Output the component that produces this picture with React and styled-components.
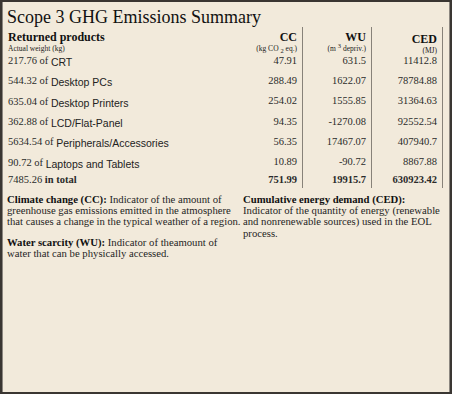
import React from "react";
import styled, { createGlobalStyle } from "styled-components";

const Global = createGlobalStyle`
  html, body {
    margin: 0;
    padding: 0;
    background: #f2eadb;
  }
`;

const Frame = styled.div`
  box-sizing: border-box;
  width: 452px;
  height: 394px;
  background: #f2eadb;
  border: 2px solid #3a3632;
  box-shadow: inset 1px 0 0 #8c8780, inset -1px 0 0 #8c8780;
  padding: 5px 4px 0 4px;
  font-family: "Liberation Serif", "Times New Roman", serif;
  color: #1a1a1a;
`;

const Title = styled.h1`
  margin: 0 0 0 1px;
  font-weight: normal;
  font-size: 18px;
  line-height: 20px;
  color: #111;
`;

const Table = styled.div`
  display: flex;
  align-items: stretch;
`;

const Column = styled.div`
  box-sizing: border-box;
  width: ${({ $w }) => $w}px;
  display: flex;
  flex-direction: column;
  align-items: ${({ $num }) => ($num ? "flex-end" : "flex-start")};
  padding: ${({ $num }) => ($num ? "0 5px 0 0" : "0 0 0 2px")};
`;

const Divider = styled.div`
  flex: 0 0 1px;
  width: 1px;
  background-color: #878279;
`;

const Cell = styled.div`
  height: ${({ $h }) => $h}px;
  display: flex;
  flex-direction: column;
  justify-content: ${({ $head }) => ($head ? "flex-start" : "center")};
  align-items: inherit;
  font-size: 10.5px;
  font-weight: ${({ $bold }) => ($bold ? "bold" : "normal")};
  color: #2a2a2a;
  white-space: nowrap;
`;

const HeadLabel = styled.div`
  font-weight: bold;
  font-size: 12px;
  line-height: 13px;
  margin-top: ${({ $top }) => $top}px;
  color: #111;
`;

const Unit = styled.div`
  font-size: 7.5px;
  line-height: 10px;
  color: #222;
`;

const Script = styled.span`
  font-size: 6.5px;
  line-height: 0;
  position: relative;
  top: ${({ $up }) => ($up ? "-3px" : "2px")};
`;

const Product = styled.span`
  font-family: "Liberation Sans", Arial, sans-serif;
  font-size: 10.5px;
  position: relative;
  top: 2px;
  color: #222;
`;

const Notes = styled.div`
  display: grid;
  grid-template-columns: 236px 1fr;
  margin-top: 6px;
  font-size: 10.7px;
  line-height: 11.3px;
  color: #1f1f1f;
`;

const Note = styled.p`
  margin: 0 0 9px 1px;
`;

const Heading = styled.b`
  display: ${({ $block }) => ($block ? "block" : "inline")};
  color: #111;
`;

const products = [
  ["217.76", "CRT"],
  ["544.32", "Desktop PCs"],
  ["635.04", "Desktop Printers"],
  ["362.88", "LCD/Flat-Panel"],
  ["5634.54", "Peripherals/Accessories"],
  ["90.72", "Laptops and Tablets"],
];

const metrics = [
  {
    key: "CC",
    top: 4,
    unit: (
      <>
        (kg CO <Script>2</Script> eq.)
      </>
    ),
    width: 70,
    values: ["47.91", "288.49", "254.02", "94.35", "56.35", "10.89"],
    total: "751.99",
  },
  {
    key: "WU",
    top: 4,
    unit: (
      <>
        (m <Script $up>3</Script> depriv.)
      </>
    ),
    width: 68,
    values: ["631.5", "1622.07", "1555.85", "-1270.08", "17467.07", "-90.72"],
    total: "19915.7",
  },
  {
    key: "CED",
    top: 6,
    unit: "(MJ)",
    width: 70,
    values: ["11412.8", "78784.88", "31364.63", "92552.54", "407940.7", "8867.88"],
    total: "630923.42",
  },
];

const HEAD = 23;
const ROW = 20.3;
const TOTAL = 16;

export default function App() {
  return (
    <>
      <Global />
      <Frame>
        <Title>Scope 3 GHG Emissions Summary</Title>
        <Table>
          <Column $w={226}>
            <Cell $h={HEAD} $head>
              <HeadLabel $top={4}>Returned products</HeadLabel>
              <Unit>Actual weight (kg)</Unit>
            </Cell>
            {products.map(([w, name]) => (
              <Cell key={name} $h={ROW}>
                <span>
                  {w} of <Product>{name}</Product>
                </span>
              </Cell>
            ))}
            <Cell $h={TOTAL}>
              <span>
                7485.26 <b>in total</b>
              </span>
            </Cell>
          </Column>
          {metrics.map((m) => (
            <React.Fragment key={m.key}>
              <Column $w={m.width} $num>
                <Cell $h={HEAD} $head>
                  <HeadLabel $top={m.top}>{m.key}</HeadLabel>
                  <Unit>{m.unit}</Unit>
                </Cell>
                {m.values.map((v, i) => (
                  <Cell key={i} $h={ROW}>
                    {v}
                  </Cell>
                ))}
                <Cell $h={TOTAL} $bold>
                  {m.total}
                </Cell>
              </Column>
              <Divider />
            </React.Fragment>
          ))}
        </Table>
        <Notes>
          <div>
            <Note>
              <Heading>Climate change (CC):</Heading> Indicator of the amount of
              greenhouse gas emissions emitted in the atmosphere that causes a
              change in the typical weather of a region.
            </Note>
            <Note>
              <Heading>Water scarcity (WU):</Heading> Indicator of theamount of
              water that can be physically accessed.
            </Note>
          </div>
          <div>
            <Note>
              <Heading $block>Cumulative energy demand (CED):</Heading>
              Indicator of the quantity of energy (renewable and nonrenewable
              sources) used in the EOL process.
            </Note>
          </div>
        </Notes>
      </Frame>
    </>
  );
}
